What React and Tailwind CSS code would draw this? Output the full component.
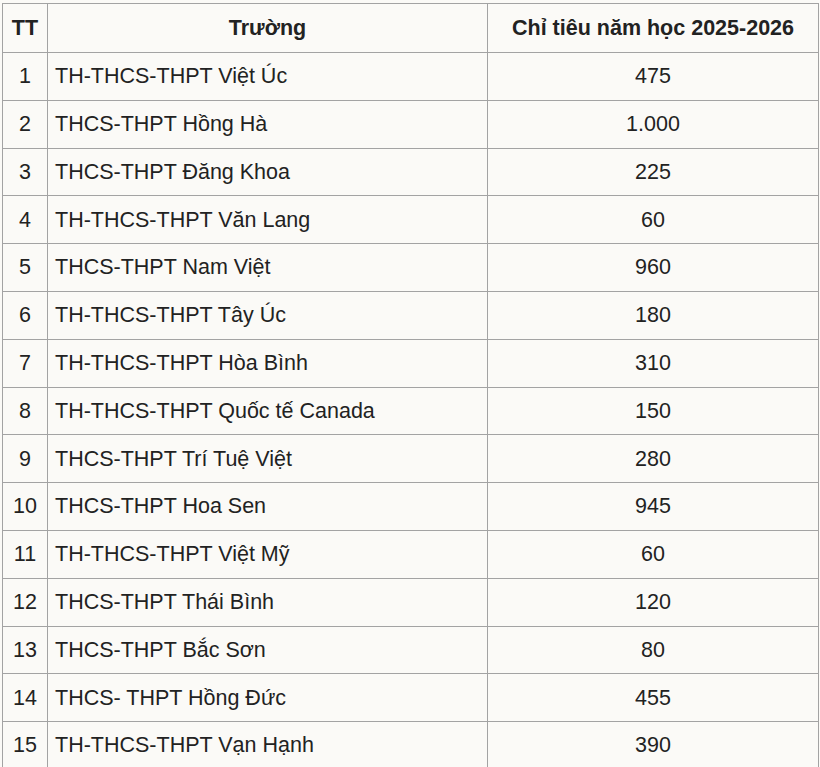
import React from 'react';

const rows = [
  ['1', 'TH-THCS-THPT Việt Úc', '475'],
  ['2', 'THCS-THPT Hồng Hà', '1.000'],
  ['3', 'THCS-THPT Đăng Khoa', '225'],
  ['4', 'TH-THCS-THPT Văn Lang', '60'],
  ['5', 'THCS-THPT Nam Việt', '960'],
  ['6', 'TH-THCS-THPT Tây Úc', '180'],
  ['7', 'TH-THCS-THPT Hòa Bình', '310'],
  ['8', 'TH-THCS-THPT Quốc tế Canada', '150'],
  ['9', 'THCS-THPT Trí Tuệ Việt', '280'],
  ['10', 'THCS-THPT Hoa Sen', '945'],
  ['11', 'TH-THCS-THPT Việt Mỹ', '60'],
  ['12', 'THCS-THPT Thái Bình', '120'],
  ['13', 'THCS-THPT Bắc Sơn', '80'],
  ['14', 'THCS- THPT Hồng Đức', '455'],
  ['15', 'TH-THCS-THPT Vạn Hạnh', '390'],
];

const cell = 'border border-[#a3a3a3] p-0';

export default function App() {
  return (
    <div
      className="w-[820px] h-[767px] overflow-hidden bg-[#fbfaf7] pt-[3px] pl-[2px] text-[21.5px] text-[#222]"
      style={{ fontFamily: '"Liberation Sans", Arial, sans-serif' }}
    >
      <table className="border-collapse table-fixed w-[816px]">
        <colgroup>
          <col className="w-[45px]" />
          <col className="w-[440px]" />
          <col className="w-[331px]" />
        </colgroup>
        <thead>
          <tr className="h-[49px]">
            <th className={`${cell} text-center font-bold`}>TT</th>
            <th className={`${cell} text-center font-bold`}>Trường</th>
            <th className={`${cell} text-center font-bold`}>Chỉ tiêu năm học 2025-2026</th>
          </tr>
        </thead>
        <tbody>
          {rows.map(([tt, name, num]) => (
            <tr key={tt} className="h-[47.8px]">
              <td className={`${cell} text-center`}>{tt}</td>
              <td className={`${cell} pl-[7px]`}>{name}</td>
              <td className={`${cell} text-center`}>{num}</td>
            </tr>
          ))}
        </tbody>
      </table>
    </div>
  );
}
